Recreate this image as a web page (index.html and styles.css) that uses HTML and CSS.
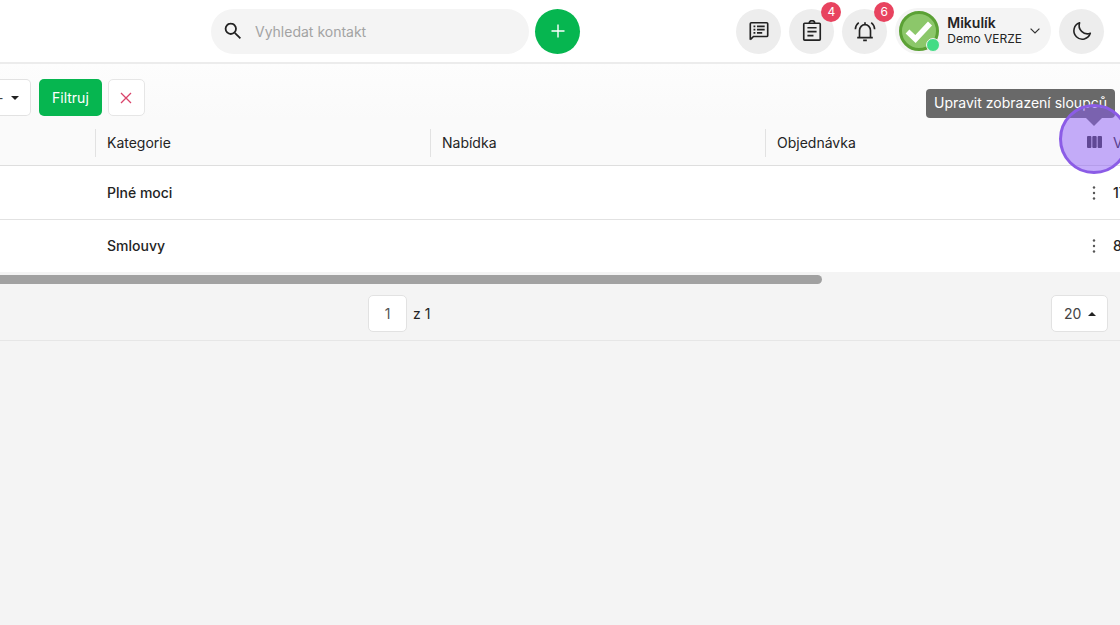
FILE: index.html
```html
<!DOCTYPE html>
<html lang="cs">
<head>
<meta charset="utf-8">
<meta name="viewport" content="width=device-width, initial-scale=1">
<title>Kategorie</title>
<link rel="stylesheet" href="styles.css">
</head>
<body>
<header class="topbar">
  <form class="search">
    <label class="search-box">
      <svg class="icon-search" viewBox="0 0 18 18" aria-hidden="true"><circle cx="6.8" cy="6.8" r="5.2"/><path d="M10.8 10.8 16.4 16.4"/></svg>
      <input class="search-input" type="text" placeholder="Vyhledat kontakt" aria-label="Vyhledat kontakt">
    </label>
    <button class="round round-add" type="button" aria-label="Přidat">
      <svg class="icon-plus" viewBox="0 0 14 14" aria-hidden="true"><path d="M7 .5v13M.5 7h13"/></svg>
    </button>
  </form>
  <div class="actions">
    <button class="round" type="button" aria-label="Zprávy">
      <svg class="icon" viewBox="0 0 24 24" aria-hidden="true"><path d="M2.500 21.500V4.200Q2.500 3 3.700 3H20.300Q21.500 3 21.500 4.200V16.800Q21.500 18 20.300 18H6L2.500 21.500"/><path d="M6 7h2M6 10.500h2M6 14h2M9.800 7h8.400M9.800 10.500h8.400M9.800 14h5.700"/></svg>
    </button>
    <button class="round" type="button" aria-label="Úkoly">
      <svg class="icon" viewBox="0 0 24 24" aria-hidden="true"><rect x="3" y="3.500" width="18" height="18.500" rx="1"/><path d="M9 3.500a3 2.800 0 0 1 6 0M7 8.500h10M7 12.700h10M7 17h6.600"/></svg>
      <span class="badge">4</span>
    </button>
    <button class="round" type="button" aria-label="Upozornění">
      <svg class="icon" viewBox="0 0 24 24" aria-hidden="true"><path d="M3.500 19.200h17M6 19v-7.500a6 6.500 0 0 1 12 0V19M12 5V2.500M10 22.300h4M1.500 10c.1-3 1.300-5.400 3.700-7.200M22.500 10c-.1-3-1.300-5.400-3.700-7.200"/></svg>
      <span class="badge">6</span>
    </button>
    <button class="profile" type="button">
      <span class="avatar">
        <svg class="avatar-art" viewBox="0 0 40 40" aria-hidden="true"><circle cx="20" cy="20" r="18.500" fill="#8cc76a" stroke="#5ba135" stroke-width="3"/><path d="m8.500 20.500 8 7.500 14.500-15.500" fill="none" stroke="#fff" stroke-width="5.500"/></svg>
        <span class="status"></span>
      </span>
      <span class="who"><strong class="name">Mikulík</strong><span class="company">Demo VERZE</span></span>
      <svg class="icon-chevron" viewBox="0 0 10 6" aria-hidden="true"><path d="m.6.600 4.400 4.400L9.400.600"/></svg>
    </button>
    <button class="round" type="button" aria-label="Tmavý režim">
      <svg class="icon-moon" viewBox="0 0 20 20" aria-hidden="true"><path d="M7.600 1.800A8.400 8.400 0 1 0 18.300 12.300 8.300 8.300 0 0 1 7.600 1.800Z"/></svg>
    </button>
  </div>
</header>
<main>
  <section class="grid-panel">
    <form class="filters">
      <span class="select-wrap">
        <select class="select select-cut" aria-label="Filtr"><option>-</option></select>
        <svg class="caret" viewBox="0 0 8 4" aria-hidden="true"><path d="M0 0h8L4 4z"/></svg>
      </span>
      <button class="btn btn-apply" type="button">Filtruj</button>
      <button class="btn btn-clear" type="button" aria-label="Zrušit filtr">
        <svg class="icon-x" viewBox="0 0 12 12" aria-hidden="true"><path d="m1 1 10 10M11 1 1 11"/></svg>
      </button>
    </form>
    <table class="table">
      <colgroup><col class="col-lead"><col class="col-main"><col class="col-main"><col><col class="col-menu"><col class="col-cut"></colgroup>
      <thead>
        <tr>
          <th></th>
          <th class="split">Kategorie</th>
          <th class="split">Nabídka</th>
          <th class="split">Objednávka</th>
          <th class="menu-cell">
            <div class="columns">
              <button class="columns-btn" type="button" aria-label="Upravit zobrazení sloupců">
                <svg class="icon-columns" viewBox="0 0 15 12" aria-hidden="true"><rect width="4.400" height="12" rx="1"/><rect x="5.300" width="4.400" height="12" rx="1"/><rect x="10.600" width="4.400" height="12" rx="1"/></svg>
              </button>
              <span class="tooltip" role="tooltip">Upravit zobrazení sloupců</span>
              <span class="spotlight"></span>
            </div>
          </th>
          <th class="cut">V</th>
        </tr>
      </thead>
      <tbody>
        <tr>
          <td></td><td>Plné moci</td><td></td><td></td>
          <td class="menu-cell"><button class="dots" type="button" aria-label="Možnosti"><svg class="icon-dots" viewBox="0 0 4 14" aria-hidden="true"><circle cx="2" cy="1.500" r="1.200"/><circle cx="2" cy="7" r="1.200"/><circle cx="2" cy="12.500" r="1.200"/></svg></button></td>
          <td class="cut">17</td>
        </tr>
        <tr>
          <td></td><td>Smlouvy</td><td></td><td></td>
          <td class="menu-cell"><button class="dots" type="button" aria-label="Možnosti"><svg class="icon-dots" viewBox="0 0 4 14" aria-hidden="true"><circle cx="2" cy="1.500" r="1.200"/><circle cx="2" cy="7" r="1.200"/><circle cx="2" cy="12.500" r="1.200"/></svg></button></td>
          <td class="cut">8</td>
        </tr>
      </tbody>
    </table>
  </section>
  <div class="scroll-track"><div class="scroll-thumb"></div></div>
  <footer class="pager">
    <label class="page"><input class="page-input" type="text" value="1" aria-label="Stránka"><span>z 1</span></label>
    <span class="select-wrap">
      <select class="select" aria-label="Počet řádků"><option>20</option></select>
      <svg class="caret" viewBox="0 0 8 4" aria-hidden="true"><path d="M0 4h8L4 0z"/></svg>
    </span>
  </footer>
</main>
</body>
</html>
```
FILE: styles.css
```css
* { box-sizing: border-box; }

body {
  margin: 0;
  overflow-x: hidden;
  background: #f4f4f4;
  color: #242424;
  font: 14px/20px Inter, "Liberation Sans", sans-serif;
}

button, input, select { font: inherit; color: inherit; margin: 0; }
button { border: 0; padding: 0; }
svg { display: block; flex: none; }

/* Top bar */
.topbar {
  display: flex;
  align-items: center;
  justify-content: space-between;
  height: 64px;
  padding: 0 16px 0 211px;
  background: #fff;
  border-bottom: 2px solid #ececec;
}

.search { display: flex; gap: 6px; flex: 0 1 369px; }

.search-box {
  display: flex;
  align-items: center;
  flex: 1;
  gap: 13px;
  height: 45px;
  padding: 0 13px;
  border-radius: 23px;
  background: #f4f4f4;
}

.search-input {
  flex: 1;
  min-width: 0;
  padding: 1px 0 0;
  border: 0;
  outline: 0;
  background: none;
}

.search-input::placeholder { color: #a3a3a3; opacity: 1; }

.icon-search { width: 18px; height: 18px; fill: none; stroke: #222; stroke-width: 1.8; }

.round {
  position: relative;
  display: grid;
  place-items: center;
  flex: none;
  width: 45px;
  height: 45px;
  border-radius: 50%;
  background: #ededed;
}

.round-add { background: #06b650; }
.icon-plus { width: 14px; height: 14px; stroke: #fff; stroke-width: 1.4; }

.actions { display: flex; align-items: center; gap: 8px; }

.icon { width: 22px; height: 22px; fill: none; stroke: #222; stroke-width: 1.8; }
.icon-moon { width: 20px; height: 20px; fill: none; stroke: #222; stroke-width: 1.6; stroke-linejoin: round; }

.badge {
  position: absolute;
  top: -7px;
  right: -7px;
  width: 20px;
  height: 20px;
  border-radius: 50%;
  background: #e8435f;
  color: #fff;
  font-size: 12px;
}

.profile {
  display: flex;
  align-items: center;
  gap: 8px;
  height: 46px;
  padding: 0 11px 0 4px;
  border-radius: 23px;
  background: #f4f4f4;
  text-align: left;
}

.avatar { position: relative; }
.avatar-art { width: 40px; height: 40px; }

.status {
  position: absolute;
  right: -1px;
  bottom: -1px;
  width: 14px;
  height: 14px;
  border: 1px solid #f4f4f4;
  border-radius: 50%;
  background: #43dc85;
}

.who { display: grid; line-height: 16px; }
.name { font-size: 14px; font-weight: 600; }
.company { font-size: 12px; }
.icon-chevron { width: 10px; height: 6px; fill: none; stroke: #333; stroke-width: 1.2; }

/* Filters */
.grid-panel { background: #fafafa; }

.filters {
  display: flex;
  gap: 6px;
  padding: 15px 0 3px;
  background: linear-gradient(#fdfdfd, #fafafa);
}

.filters .select-wrap { margin-right: 2px; }

.select-wrap { position: relative; display: block; }

.select {
  display: block;
  width: 57px;
  height: 37px;
  padding: 0 12px;
  border: 1px solid #e2e2e2;
  border-radius: 5px;
  background: #fff;
  color: #444;
  appearance: none;
}

.select-cut {
  width: 31px;
  padding: 0;
  border-left: 0;
  border-radius: 0 5px 5px 0;
  text-indent: -3px;
}

.caret {
  position: absolute;
  right: 12px;
  top: 17px;
  width: 8px;
  height: 4px;
  fill: #222;
  pointer-events: none;
}

.btn {
  display: grid;
  place-items: center;
  height: 37px;
  border-radius: 5px;
}

.btn-apply { padding: 0 13px; background: #06b650; color: #fff; }
.btn-clear { width: 37px; border: 1px solid #e6e6e6; background: #fff; }
.icon-x { width: 12px; height: 12px; stroke: #d9436a; stroke-width: 1.3; }

/* Table */
.table {
  width: 100%;
  border-collapse: separate;
  border-spacing: 0;
  table-layout: fixed;
}

.col-lead { width: 95px; }
.col-main { width: 335px; }
.col-menu { width: 30px; }
.col-cut { width: 11px; }

.table th, .table td {
  padding: 0 12px;
  text-align: left;
  font-weight: 400;
  white-space: nowrap;
}

.table th { height: 47px; padding-top: 1px; border-bottom: 1px solid #dedede; }

.split {
  background: linear-gradient(#e2e2e2, #e2e2e2) 0 10px / 1px 28px no-repeat;
}

.table td { height: 53px; background: #fff; font-weight: 500; }
.table tbody tr + tr td { height: 53px; border-top: 1px solid #e2e2e2; }

.table .menu-cell { padding: 0; }
.table .cut { padding-left: 4px; padding-right: 0; overflow: hidden; }

.columns {
  position: relative;
  display: grid;
  place-items: center;
  width: 30px;
  height: 30px;
  margin: 0 auto;
}

.columns-btn, .dots {
  display: grid;
  place-items: center;
  width: 30px;
  height: 30px;
  background: none;
}

.icon-columns { width: 15px; height: 12px; fill: #343434; }
.icon-dots { width: 4px; height: 14px; fill: #555; }

.tooltip {
  position: absolute;
  right: -6px;
  bottom: 39px;
  padding: 4px 8px 5px;
  border-radius: 4px;
  background: #696969;
  color: #fff;
}

.tooltip::after {
  content: "";
  position: absolute;
  top: 100%;
  right: 13px;
  border: 8px solid transparent;
  border-top-color: #696969;
  border-bottom: 0;
}

.spotlight {
  position: absolute;
  top: -20px;
  left: -20px;
  width: 70px;
  height: 70px;
  margin-top: -3px;
  border: 3px solid #8b5ce6;
  border-radius: 50%;
  background: rgba(139, 92, 246, 0.5);
  pointer-events: none;
}

/* Scrollbar and pager */
.scroll-track { padding: 3px 0 4px; }

.scroll-thumb {
  width: 73.4%;
  height: 9px;
  border-radius: 0 5px 5px 0;
  background: #a1a1a1;
}

.pager {
  display: flex;
  align-items: center;
  justify-content: space-between;
  padding: 7px 12px 8px 368px;
  border-bottom: 1px solid #e6e6e6;
}

.page { display: flex; align-items: center; gap: 6px; }

.page-input {
  width: 39px;
  height: 37px;
  padding: 0;
  border: 1px solid #e2e2e2;
  border-radius: 5px;
  background: #fff;
  color: #555;
  text-align: center;
}
```
